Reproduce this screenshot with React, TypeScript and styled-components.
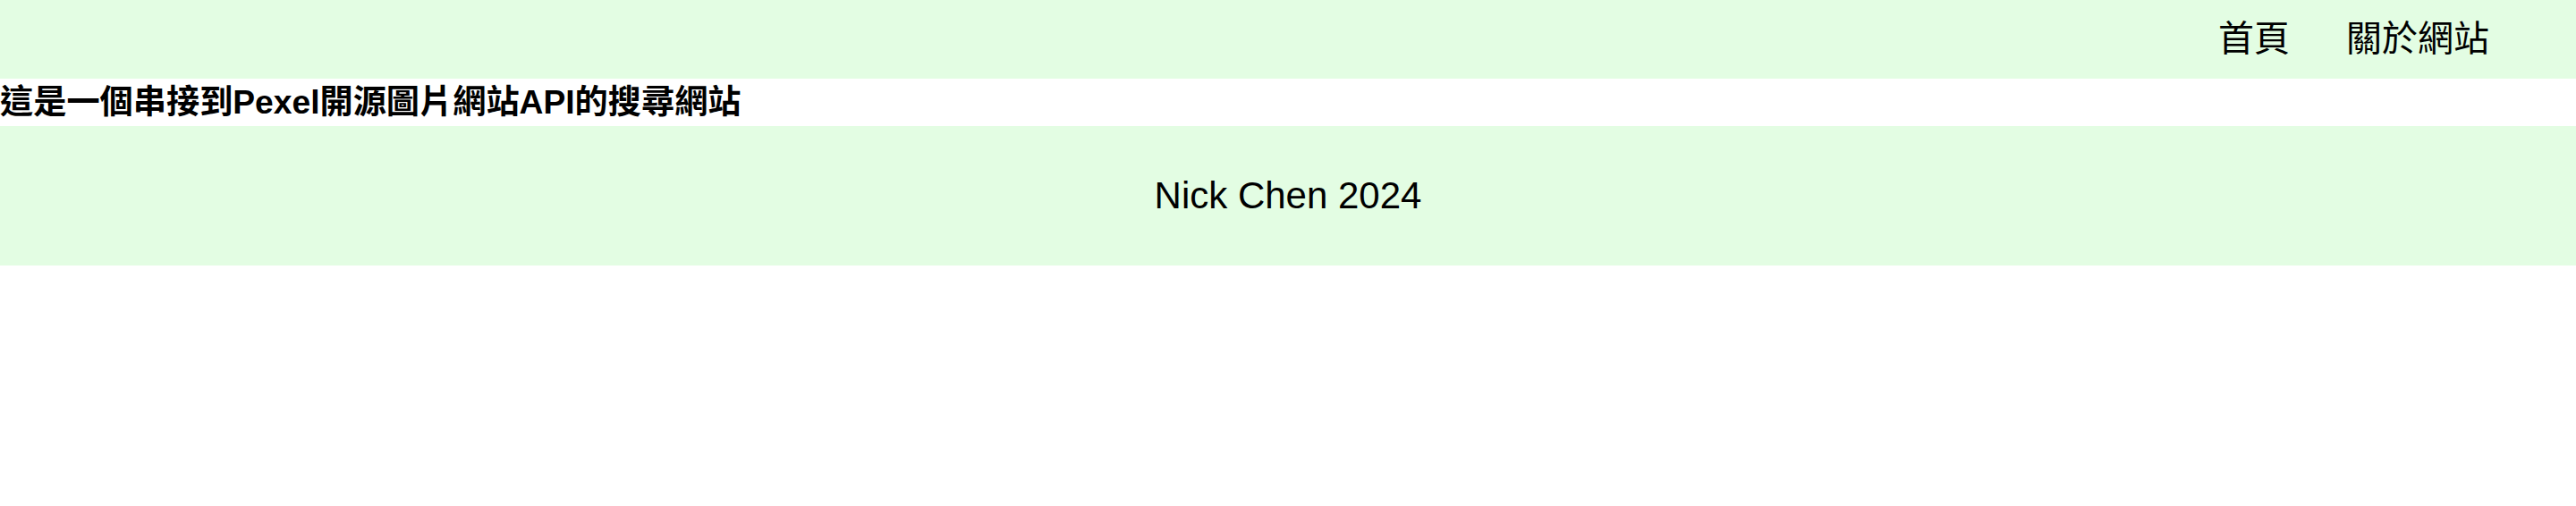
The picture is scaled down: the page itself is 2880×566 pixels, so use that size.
import * as React from 'react'
import styled, { createGlobalStyle } from 'styled-components'

const GlobalStyle = createGlobalStyle`
  * {
    box-sizing: border-box;
  }

  body {
    margin: 0;
    background: #ffffff;
    color: #000000;
    font-family: "Liberation Sans", "Noto Sans CJK TC", sans-serif;
  }
`

const Nav = styled.nav`
  height: 88px;
  background-color: #e3fde3;
  display: flex;
  align-items: center;
  justify-content: flex-end;
  padding-right: 97px;
  padding-bottom: 8px;
`

const NavList = styled.ul`
  display: flex;
  gap: 63px;
  margin: 0;
  padding: 0;
  list-style: none;
`

const NavItem = styled.li`
  font-size: 40px;
  line-height: 1;
  font-family: "Noto Sans CJK TC", sans-serif;
  cursor: pointer;
`

const Title = styled.h1`
  margin: 0;
  font-size: 37.2px;
  line-height: 53px;
  font-weight: 700;
  white-space: nowrap;
`

const Footer = styled.footer`
  height: 156px;
  background-color: #e3fde3;
  display: flex;
  align-items: center;
  justify-content: center;

  p {
    margin: 0;
    font-size: 42px;
    line-height: 1;
  }
`

const App: React.FC = () => {
  return (
    <>
      <GlobalStyle />
      <Nav>
        <NavList>
          <NavItem>首頁</NavItem>
          <NavItem>關於網站</NavItem>
        </NavList>
      </Nav>

      <Title>這是一個串接到Pexel開源圖片網站API的搜尋網站</Title>

      <Footer>
        <p>Nick Chen 2024</p>
      </Footer>
    </>
  )
}

export default App
